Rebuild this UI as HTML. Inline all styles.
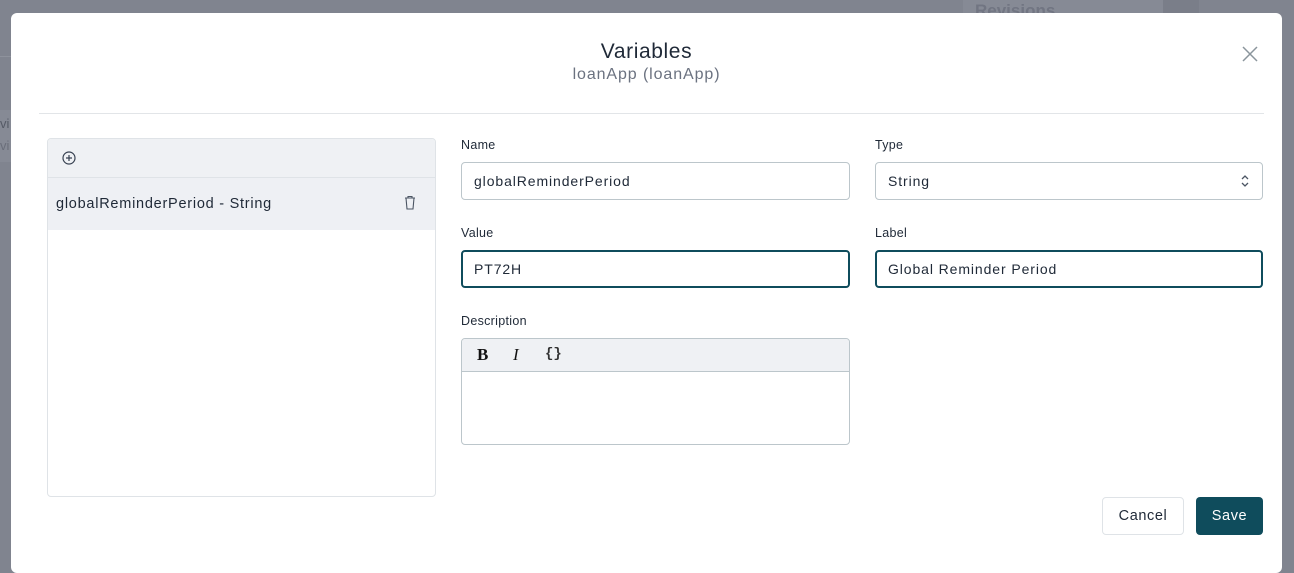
<!DOCTYPE html>
<html><head><meta charset="utf-8"><style>
*{box-sizing:border-box;margin:0;padding:0}
body{width:1294px;height:562px;overflow:hidden;background:#80848f;font-family:"Liberation Sans",sans-serif;position:relative;color:#1f2937}
.bgel{position:absolute}
.modal{position:absolute;left:11px;top:13px;width:1271px;height:560px;background:#fff;border-radius:6px}
.a{position:absolute}
.lbl{font-size:12.5px;color:#1f2937;letter-spacing:0.3px}
.inp{position:absolute;height:38px;border:1px solid #bcc6cb;border-radius:4px;font-size:14px;padding-left:12px;line-height:36px;color:#1f2937;letter-spacing:0.9px}
.foc{border:2px solid #0f4c5c;padding-left:11px;line-height:34px}
</style></head><body>
<div class="bgel" style="left:963px;top:0;width:236px;height:13px;background:#868a95"></div>
<div class="bgel" style="left:1163px;top:0;width:36px;height:13px;background:#7a7e89"></div>
<div class="bgel" style="left:975px;top:0;font-size:17px;font-weight:bold;color:#717582;line-height:22px">Revisions</div>
<div class="bgel" style="left:0;top:56px;width:11px;height:1px;background:#8e929c"></div>
<div class="bgel" style="left:0;top:110px;width:11px;height:52px;background:#868a95"></div>
<div class="bgel" style="left:0;top:116px;font-size:13px;color:#555a66">vi</div>
<div class="bgel" style="left:0;top:138px;font-size:13px;color:#6a6e7a">vi</div>

<div class="modal">
  <div class="a" style="left:0;width:1271px;top:27px;text-align:center;font-size:21px;letter-spacing:0.6px;color:#1f2937">Variables</div>
  <div class="a" style="left:0;width:1271px;top:53px;text-align:center;font-size:16px;letter-spacing:0.9px;color:#6b7280">loanApp (loanApp)</div>
  <svg class="a" style="left:1230px;top:32px" width="18" height="18" viewBox="0 0 18 18"><path d="M2 2L16 16M16 2L2 16" stroke="#8a959c" stroke-width="1.5" fill="none"/></svg>
  <div class="a" style="left:28px;top:100px;width:1225px;height:1px;background:#e2e5e8"></div>

  <div class="a" style="left:36px;top:125px;width:389px;height:359px;border:1px solid #dfe3e7;border-radius:4px;overflow:hidden">
    <div style="height:39px;background:#eff1f4;border-bottom:1px solid #dfe3e7;position:relative">
      <svg style="position:absolute;left:14px;top:12px" width="14" height="14" viewBox="0 0 14 14"><circle cx="7" cy="7" r="6" stroke="#374151" stroke-width="1.2" fill="none"/><path d="M7 4V10M4 7H10" stroke="#374151" stroke-width="1.2"/></svg>
    </div>
    <div style="height:52px;background:#eef0f4;position:relative">
      <div style="position:absolute;left:8px;top:18px;font-size:14.5px;letter-spacing:0.75px;color:#1f2937">globalReminderPeriod - String</div>
      <svg style="position:absolute;left:356px;top:17px" width="12" height="15" viewBox="0 0 12 15"><path d="M1 3H11M4 3V1.5H8V3M2 3L3 14H9L10 3" stroke="#4b5563" stroke-width="1.1" fill="none"/></svg>
    </div>
  </div>

  <div class="a lbl" style="left:450px;top:125px">Name</div>
  <div class="inp" style="left:450px;top:149px;width:389px">globalReminderPeriod</div>
  <div class="a lbl" style="left:864px;top:125px">Type</div>
  <div class="inp" style="left:864px;top:149px;width:388px">String
    <svg style="position:absolute;right:12px;top:11px" width="10" height="14" viewBox="0 0 10 14"><path d="M2 5L5 2L8 5M2 9L5 12L8 9" stroke="#4b5563" stroke-width="1.3" fill="none"/></svg>
  </div>
  <div class="a lbl" style="left:450px;top:213px">Value</div>
  <div class="inp foc" style="left:450px;top:237px;width:389px">PT72H</div>
  <div class="a lbl" style="left:864px;top:213px">Label</div>
  <div class="inp foc" style="left:864px;top:237px;width:388px">Global Reminder Period</div>
  <div class="a lbl" style="left:450px;top:301px">Description</div>
  <div class="a" style="left:450px;top:325px;width:389px;height:107px;border:1px solid #bcc6cb;border-radius:4px;overflow:hidden">
    <div style="height:33px;background:#eff1f4;border-bottom:1px solid #bcc6cb;position:relative;font-family:'Liberation Serif',serif">
      <span style="position:absolute;left:15px;top:6px;font-size:17px;font-weight:bold;color:#111">B</span>
      <span style="position:absolute;left:51px;top:6px;font-size:17px;font-style:italic;color:#111">I</span>
      <span style="position:absolute;left:83px;top:7px;font-size:14px;font-weight:bold;font-family:'Liberation Mono',monospace;color:#333">{}</span>
    </div>
  </div>

  <div class="a" style="left:1091px;top:484px;width:82px;height:38px;border:1px solid #dfe3e7;border-radius:4px;text-align:center;line-height:37px;font-size:14.5px;letter-spacing:0.6px;color:#1f2937">Cancel</div>
  <div class="a" style="left:1185px;top:484px;width:67px;height:38px;background:#0f4c5c;border-radius:4px;text-align:center;line-height:39px;font-size:14.5px;letter-spacing:0.6px;color:#fff">Save</div>
</div>
</body></html>
